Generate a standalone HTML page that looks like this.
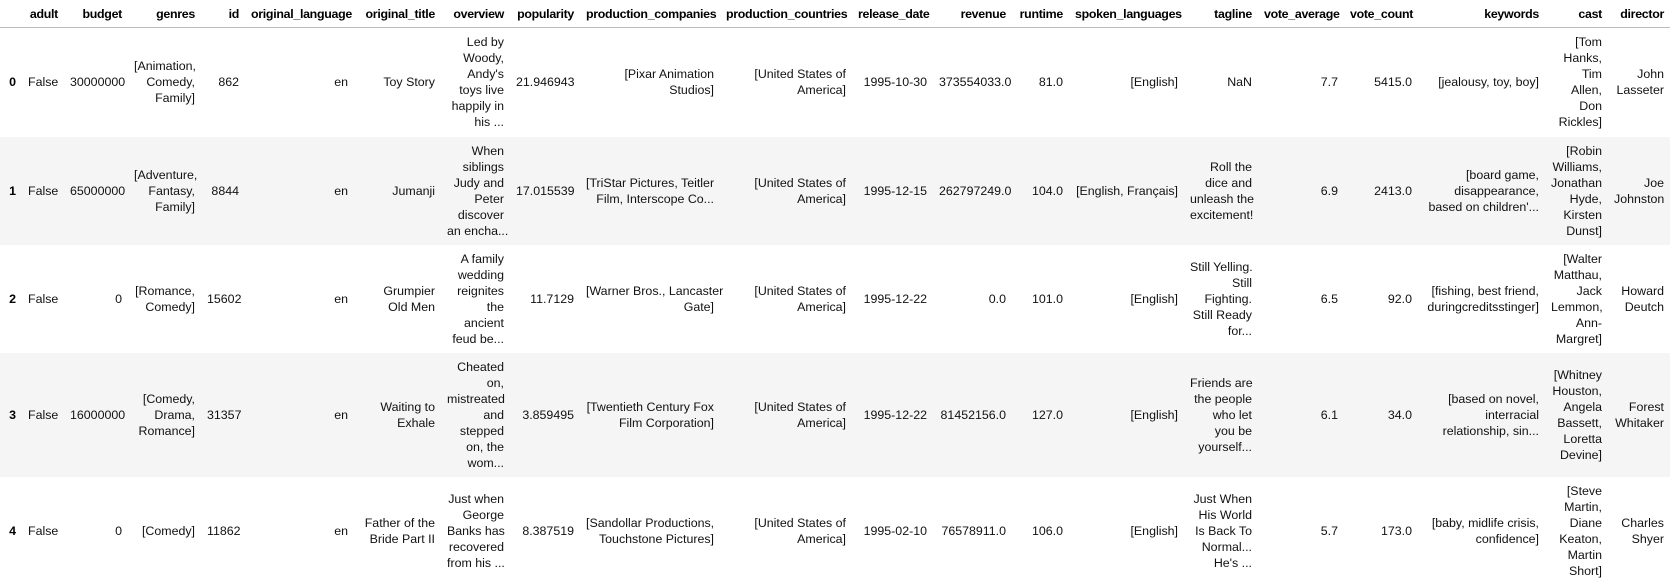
<!DOCTYPE html>
<html><head><meta charset="utf-8">
<style>
html,body{margin:0;padding:0;background:#fff;}
body{width:1670px;height:582px;overflow:hidden;font-family:"Liberation Sans",Arial,sans-serif;font-size:12.4px;color:#000;}
table{border-collapse:collapse;table-layout:fixed;width:1670px;}
th,td{padding:6px 6px;text-align:right;vertical-align:middle;white-space:nowrap;line-height:16px;overflow:visible;}
thead th{font-weight:bold;height:15px;padding:6px 6px 5px 6px;border-bottom:1px solid #bdbdbd;letter-spacing:-0.3px;}
tbody th{font-weight:bold;}
tbody tr:nth-child(odd){background:#fff;}
tbody tr:nth-child(even){background:#f5f5f5;}
td{color:#111;}
</style></head><body>
<table>
<colgroup>
<col style="width:22px"><col style="width:42px"><col style="width:64px"><col style="width:73px"><col style="width:44px"><col style="width:109px"><col style="width:87px"><col style="width:69px"><col style="width:70px"><col style="width:140px"><col style="width:132px"><col style="width:81px"><col style="width:79px"><col style="width:57px"><col style="width:115px"><col style="width:74px"><col style="width:86px"><col style="width:74px"><col style="width:127px"><col style="width:63px"><col style="width:62px">
</colgroup>
<thead><tr><th></th><th>adult</th><th>budget</th><th>genres</th><th>id</th><th>original_language</th><th>original_title</th><th>overview</th><th>popularity</th><th>production_companies</th><th>production_countries</th><th>release_date</th><th>revenue</th><th>runtime</th><th>spoken_languages</th><th>tagline</th><th>vote_average</th><th>vote_count</th><th>keywords</th><th>cast</th><th>director</th></tr></thead>
<tbody>
<tr style="height:109px"><th>0</th><td>False</td><td>30000000</td><td>[Animation,<br>Comedy,<br>Family]</td><td>862</td><td>en</td><td>Toy Story</td><td>Led by<br>Woody,<br>Andy's<br>toys live<br>happily in<br>his ...</td><td>21.946943</td><td>[Pixar Animation<br>Studios]</td><td>[United States of<br>America]</td><td>1995-10-30</td><td>373554033.0</td><td>81.0</td><td>[English]</td><td>NaN</td><td>7.7</td><td>5415.0</td><td>[jealousy, toy, boy]</td><td>[Tom<br>Hanks,<br>Tim<br>Allen,<br>Don<br>Rickles]</td><td>John<br>Lasseter</td></tr>
<tr style="height:108px"><th>1</th><td>False</td><td>65000000</td><td>[Adventure,<br>Fantasy,<br>Family]</td><td>8844</td><td>en</td><td>Jumanji</td><td>When<br>siblings<br>Judy and<br>Peter<br>discover<br>an encha...</td><td>17.015539</td><td>[TriStar Pictures, Teitler<br>Film, Interscope Co...</td><td>[United States of<br>America]</td><td>1995-12-15</td><td>262797249.0</td><td>104.0</td><td>[English, Français]</td><td>Roll the<br>dice and<br>unleash the<br>excitement!</td><td>6.9</td><td>2413.0</td><td>[board game,<br>disappearance,<br>based on children'...</td><td>[Robin<br>Williams,<br>Jonathan<br>Hyde,<br>Kirsten<br>Dunst]</td><td>Joe<br>Johnston</td></tr>
<tr style="height:108px"><th>2</th><td>False</td><td>0</td><td>[Romance,<br>Comedy]</td><td>15602</td><td>en</td><td>Grumpier<br>Old Men</td><td>A family<br>wedding<br>reignites<br>the<br>ancient<br>feud be...</td><td>11.7129</td><td>[Warner Bros., Lancaster<br>Gate]</td><td>[United States of<br>America]</td><td>1995-12-22</td><td>0.0</td><td>101.0</td><td>[English]</td><td>Still Yelling.<br>Still<br>Fighting.<br>Still Ready<br>for...</td><td>6.5</td><td>92.0</td><td>[fishing, best friend,<br>duringcreditsstinger]</td><td>[Walter<br>Matthau,<br>Jack<br>Lemmon,<br>Ann-<br>Margret]</td><td>Howard<br>Deutch</td></tr>
<tr style="height:124px"><th>3</th><td>False</td><td>16000000</td><td>[Comedy,<br>Drama,<br>Romance]</td><td>31357</td><td>en</td><td>Waiting to<br>Exhale</td><td>Cheated<br>on,<br>mistreated<br>and<br>stepped<br>on, the<br>wom...</td><td>3.859495</td><td>[Twentieth Century Fox<br>Film Corporation]</td><td>[United States of<br>America]</td><td>1995-12-22</td><td>81452156.0</td><td>127.0</td><td>[English]</td><td>Friends are<br>the people<br>who let<br>you be<br>yourself...</td><td>6.1</td><td>34.0</td><td>[based on novel,<br>interracial<br>relationship, sin...</td><td>[Whitney<br>Houston,<br>Angela<br>Bassett,<br>Loretta<br>Devine]</td><td>Forest<br>Whitaker</td></tr>
<tr style="height:108px"><th>4</th><td>False</td><td>0</td><td>[Comedy]</td><td>11862</td><td>en</td><td>Father of the<br>Bride Part II</td><td>Just when<br>George<br>Banks has<br>recovered<br>from his ...</td><td>8.387519</td><td>[Sandollar Productions,<br>Touchstone Pictures]</td><td>[United States of<br>America]</td><td>1995-02-10</td><td>76578911.0</td><td>106.0</td><td>[English]</td><td>Just When<br>His World<br>Is Back To<br>Normal...<br>He's ...</td><td>5.7</td><td>173.0</td><td>[baby, midlife crisis,<br>confidence]</td><td>[Steve<br>Martin,<br>Diane<br>Keaton,<br>Martin<br>Short]</td><td>Charles<br>Shyer</td></tr>
</tbody>
</table>
</body></html>
